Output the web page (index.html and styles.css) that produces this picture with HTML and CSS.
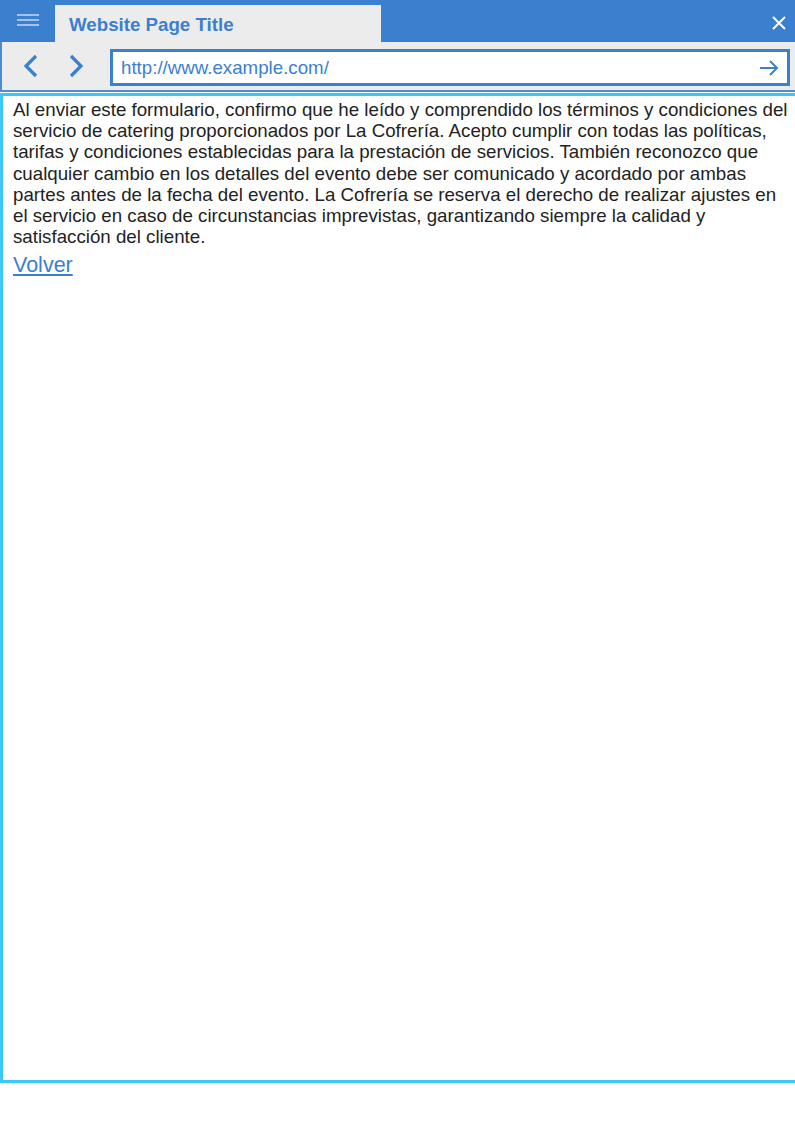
FILE: index.html
```html
<!DOCTYPE html>
<html lang="es">
<head>
<meta charset="utf-8">
<title>Website Page Title</title>
<link rel="stylesheet" href="styles.css">
</head>
<body>
<div class="window">
  <div class="titlebar">
    <div class="menu">
      <svg width="22" height="12" viewBox="0 0 22 12"><path d="M0 1h22M0 6h22M0 11h22" stroke="#a4c3ec" stroke-width="2.2"/></svg>
    </div>
    <div class="tab">Website Page Title</div>
    <div class="spacer"></div>
    <div class="close">
      <svg width="14" height="14" viewBox="0 0 14 14"><path d="M1 1L13 13M13 1L1 13" stroke="#ffffff" stroke-width="2"/></svg>
    </div>
  </div>
  <div class="toolbar">
    <div class="nav">
      <svg width="15" height="24" viewBox="0 0 15 24"><path d="M13 2L3 12L13 22" fill="none" stroke="#3b7fcf" stroke-width="3.2"/></svg>
    </div>
    <div class="nav">
      <svg width="15" height="24" viewBox="0 0 15 24"><path d="M2 2L12 12L2 22" fill="none" stroke="#3b7fcf" stroke-width="3.2"/></svg>
    </div>
    <div class="urlbox">
      <span class="url">http://www.example.com/</span>
      <svg class="go" width="19" height="16" viewBox="0 0 19 16"><path d="M0 8H17M10 1L17 8L10 15" fill="none" stroke="#3b7fcf" stroke-width="2"/></svg>
    </div>
  </div>
  <div class="content">
    <p class="terms">Al enviar este formulario, confirmo que he leído y comprendido los términos y condiciones del servicio de catering proporcionados por La Cofrería. Acepto cumplir con todas las políticas, tarifas y condiciones establecidas para la prestación de servicios. También reconozco que cualquier cambio en los detalles del evento debe ser comunicado y acordado por ambas partes antes de la fecha del evento. La Cofrería se reserva el derecho de realizar ajustes en el servicio en caso de circunstancias imprevistas, garantizando siempre la calidad y satisfacción del cliente.</p>
    <a class="back" href="#">Volver</a>
  </div>
</div>
</body>
</html>
```
FILE: styles.css
```css
html, body {
  margin: 0;
  padding: 0;
  background: #ffffff;
}
body {
  font-family: "Liberation Sans", Arial, sans-serif;
  color: #222222;
}
.window {
  width: 795px;
  display: flex;
  flex-direction: column;
}
.titlebar {
  height: 42px;
  background: #3b7fcf;
  display: flex;
  align-items: flex-end;
}
.menu {
  width: 55px;
  height: 42px;
  display: flex;
  align-items: center;
  justify-content: center;
  box-sizing: border-box;
  padding-bottom: 2px;
}
.tab {
  width: 326px;
  height: 37px;
  background: #ececec;
  color: #3b7fcf;
  font-weight: bold;
  font-size: 18.72px;
  display: flex;
  align-items: center;
  padding-left: 14px;
  box-sizing: border-box;
  padding-top: 2px;
}
.spacer {
  flex: 1;
}
.close {
  width: 30px;
  height: 42px;
  display: flex;
  align-items: center;
  justify-content: center;
  padding-right: 2px;
  padding-top: 4px;
  box-sizing: border-box;
}
.toolbar {
  height: 50px;
  background: #ececec;
  border-left: 2px solid #4f8bd4;
  border-bottom: 2px solid #4f8bd4;
  display: flex;
  align-items: center;
  box-sizing: border-box;
  padding-left: 21px;
  padding-right: 5px;
}
.nav {
  width: 46px;
  height: 24px;
  display: flex;
  align-items: center;
}
.urlbox {
  flex: 1;
  height: 37px;
  margin-left: -5px;
  margin-top: 3px;
  box-sizing: border-box;
  border: 3px solid #3b7fcf;
  background: #ffffff;
  display: flex;
  align-items: center;
  padding-left: 8px;
  padding-right: 8px;
}
.url {
  flex: 1;
  color: #3b7fcf;
  font-size: 18.72px;
}
.go {
  display: block;
}
.content {
  height: 990px;
  margin-top: 1px;
  border-top: 3px solid #3ec6fb;
  border-left: 3px solid #3ec6fb;
  border-bottom: 3px solid #3ec6fb;
  box-sizing: border-box;
  padding: 3px 4px 0 10px;
}
.terms {
  margin: 0;
  font-size: 18.72px;
  line-height: 21.2px;
  color: #222222;
}
.back {
  display: inline-block;
  margin-top: 6px;
  font-size: 21.5px;
  color: #3b7fcf;
  text-decoration: underline;
}
```
